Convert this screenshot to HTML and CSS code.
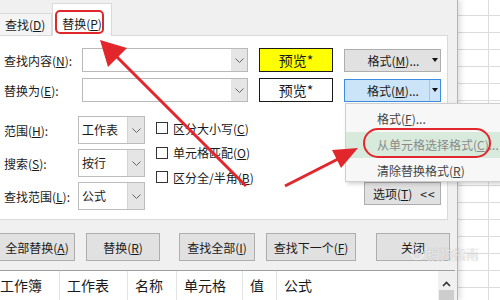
FILE: index.html
```html
<!DOCTYPE html>
<html lang="zh-CN">
<head>
    <meta charset="UTF-8">
    <title>查找和替换</title>
    <link rel="stylesheet" href="styles.css">
</head>
<body>
<div class="screen">
    <div class="dialog">
        <div class="tabs">
            <div class="tab">查找(<u>D</u>)</div>
            <div class="tab active">替换(<u>P</u>)</div>
        </div>

        <div class="panel">
            <div class="row">
                <span class="lbl">查找内容(<u>N</u>):</span>
                <div class="combo"><span class="drop"><svg width="9" height="5" viewBox="0 0 9 5"><path d="M0.5 0.5 L4.5 4.5 L8.5 0.5" fill="none" stroke="#666" stroke-width="1"/></svg></span></div>
                <div class="preview hl">预览*</div>
                <div class="fmt"><span class="txt">格式(<u>M</u>)...</span><span class="split"><i class="caret"></i></span></div>
            </div>
            <div class="row">
                <span class="lbl">替换为(<u>E</u>):</span>
                <div class="combo"><span class="drop"><svg width="9" height="5" viewBox="0 0 9 5"><path d="M0.5 0.5 L4.5 4.5 L8.5 0.5" fill="none" stroke="#666" stroke-width="1"/></svg></span></div>
                <div class="preview">预览*</div>
                <div class="fmt on"><span class="txt">格式(<u>M</u>)...</span><span class="split"><i class="caret"></i></span></div>
            </div>

            <div class="opts">
                <div class="fields">
                    <div class="field">
                        <span class="lbl">范围(<u>H</u>):</span>
                        <div class="select"><span>工作表</span><span class="drop"><svg width="9" height="5" viewBox="0 0 9 5"><path d="M0.5 0.5 L4.5 4.5 L8.5 0.5" fill="none" stroke="#666" stroke-width="1"/></svg></span></div>
                    </div>
                    <div class="field">
                        <span class="lbl">搜索(<u>S</u>):</span>
                        <div class="select"><span>按行</span><span class="drop"><svg width="9" height="5" viewBox="0 0 9 5"><path d="M0.5 0.5 L4.5 4.5 L8.5 0.5" fill="none" stroke="#666" stroke-width="1"/></svg></span></div>
                    </div>
                    <div class="field">
                        <span class="lbl">查找范围(<u>L</u>):</span>
                        <div class="select"><span>公式</span><span class="drop"><svg width="9" height="5" viewBox="0 0 9 5"><path d="M0.5 0.5 L4.5 4.5 L8.5 0.5" fill="none" stroke="#666" stroke-width="1"/></svg></span></div>
                    </div>
                </div>
                <div class="checks">
                    <div class="check"><span class="box"></span><span>区分大小写(<u>C</u>)</span></div>
                    <div class="check"><span class="box"></span><span>单元格匹配(<u>O</u>)</span></div>
                    <div class="check"><span class="box"></span><span>区分全/半角(<u>B</u>)</span></div>
                </div>
                <div class="btn options-btn"><span>选项(<u>T</u>)</span><span class="less">&lt;&lt;</span></div>
            </div>
        </div>

        <div class="actions">
            <div class="btn w76"><span>全部替换(<u>A</u>)</span></div>
            <div class="btn w74 gap11"><span>替换(<u>R</u>)</span></div>
            <div class="btn w76 gap19"><span>查找全部(<u>I</u>)</span></div>
            <div class="btn w90 gap11"><span>查找下一个(<u>F</u>)</span></div>
            <div class="btn w74 gap20"><span>关闭</span></div>
        </div>

        <div class="results">
            <div class="col c1">工作簿</div>
            <div class="col c2">工作表</div>
            <div class="col c3">名称</div>
            <div class="col c4">单元格</div>
            <div class="col c5">值</div>
            <div class="col c6">公式</div>
            <div class="vscroll">
                <svg width="17" height="12" viewBox="0 0 17 12"><path d="M5 9 L8.5 5.5 L12 9" fill="none" stroke="#333" stroke-width="1.6"/></svg>
                <div class="thumb"></div>
            </div>
        </div>
    </div>

    <div class="sheet"></div>

    <!-- dropdown of the second 格式 button -->
    <div class="menu">
        <div class="item">格式(<u>F</u>)...</div>
        <div class="item sel">从单元格选择格式(<u>C</u>)...</div>
        <div class="item">清除替换格式(<u>R</u>)</div>
    </div>

    <div class="wm"><span class="wm-logo"></span>搜狗指南</div>

    <!-- red annotations -->
    <div class="mark mark-tab"></div>
    <div class="mark mark-item"></div>
    <svg class="arrows" width="500" height="300" viewBox="0 0 500 300">
        <line x1="246" y1="186" x2="114" y2="54" stroke="#e1262c" stroke-width="3"/>
        <polygon points="100,40 127,48 108,67" fill="#e1262c"/>
        <line x1="285" y1="186" x2="340" y2="158" stroke="#e1262c" stroke-width="3"/>
        <polygon points="358,148 341,168 332,150" fill="#e1262c"/>
    </svg>
</div>
</body>
</html>
```

FILE: styles.css
```css
body {
    margin: 0;
    font-family: "Noto Sans CJK SC", "Microsoft YaHei", sans-serif;
    font-size: 12px;
    color: #1a1a1a;
}
u {
    text-underline-offset: 1px;
}
.screen {
    position: relative;
    width: 500px;
    height: 300px;
    overflow: hidden;
    display: flex;
    background: #fff;
}
.dialog {
    width: 458px;
    flex: none;
    box-sizing: border-box;
    background: #f0f0f0;
    border-right: 1px solid #b4b4b4;
    box-shadow: 3px 0 5px rgba(0, 0, 0, 0.12);
    position: relative;
    z-index: 1;
}
.sheet {
    flex: 1;
    background-color: #fff;
    background-image:
        linear-gradient(to right, transparent 30px, #dcdcdc 30px, #dcdcdc 31px, transparent 31px),
        repeating-linear-gradient(to bottom, transparent 0 16px, #dcdcdc 16px 17px);
    background-position: 0 0, 0 -1px;
}

/* tabs */
.tabs {
    height: 35px;
    display: flex;
    align-items: flex-end;
}
.tab {
    box-sizing: border-box;
    width: 53px;
    height: 22px;
    margin-left: -1px;
    padding-left: 5px;
    border: 1px solid #d9d9d9;
    border-bottom: none;
    background: #f4f4f4;
    display: flex;
    align-items: center;
}
.tab.active {
    width: 60px;
    height: 33px;
    margin-left: 0;
    margin-bottom: -1px;
    padding: 7px 0 0;
    justify-content: center;
    background: #fff;
    position: relative;
    z-index: 1;
}

/* white tab page */
.panel {
    box-sizing: border-box;
    width: 449px;
    height: 185px;
    margin-left: -1px;
    padding: 12px 6px 0 4px;
    background: #fff;
    border: 1px solid #d9d9d9;
}
.row {
    display: flex;
    align-items: center;
    height: 24px;
}
.row + .row {
    margin-top: 6px;
}
.lbl {
    width: 78px;
    flex: none;
    white-space: nowrap;
}
.combo {
    width: 166px;
    height: 24px;
    box-sizing: border-box;
    border: 1px solid #b9b9b9;
    display: flex;
    justify-content: flex-end;
    background: #fff;
}
.drop {
    width: 16px;
    flex: none;
    background: #e5e5e5;
    display: flex;
    align-items: center;
    justify-content: center;
}
.preview {
    width: 74px;
    height: 24px;
    box-sizing: border-box;
    margin-left: 11px;
    border: 1px solid #1a1a1a;
    text-align: center;
    line-height: 22px;
    font-size: 14px;
    background: #fff;
}
.preview.hl {
    background: #ffff00;
}
.fmt {
    width: 97px;
    height: 23px;
    box-sizing: border-box;
    margin-left: 11px;
    display: flex;
    border: 1px solid #adadad;
    background: #e1e1e1;
}
.fmt .txt {
    flex: 1;
    text-align: center;
    padding-left: 12px;
    line-height: 21px;
}
.fmt .split {
    width: 10px;
    display: flex;
    align-items: center;
    justify-content: center;
}
.caret {
    width: 0;
    height: 0;
    border-left: 3.5px solid transparent;
    border-right: 3.5px solid transparent;
    border-top: 4px solid #111;
}
.fmt.on {
    background: #cce4f7;
    border-color: #3d8ee0;
}
.fmt.on .split {
    border-left: 1px solid #a4c6e6;
}

/* options block */
.opts {
    display: flex;
    height: 94px;
    margin-top: 14px;
}
.fields {
    display: flex;
    flex-direction: column;
    gap: 5px;
}
.field {
    display: flex;
    align-items: center;
    height: 28px;
}
.field .lbl {
    width: 74px;
}
.select {
    width: 67px;
    height: 28px;
    box-sizing: border-box;
    border: 1px solid #bcbcbc;
    display: flex;
    background: #fff;
}
.select span:first-child {
    flex: 1;
    padding-left: 3px;
    line-height: 26px;
}
.select .drop {
    width: 16px;
    border-left: 1px solid #d4d4d4;
}
.checks {
    margin-left: 11px;
}
.check {
    height: 24.5px;
    display: flex;
    align-items: center;
    gap: 5px;
    white-space: nowrap;
}
.box {
    width: 10px;
    height: 10px;
    border: 1px solid #333;
    background: #fff;
}
.btn {
    box-sizing: border-box;
    height: 28px;
    border: 1px solid #adadad;
    background: #e1e1e1;
    display: flex;
    align-items: center;
    justify-content: center;
    white-space: nowrap;
}
.options-btn {
    width: 77px;
    height: 23px;
    margin-left: auto;
    margin-bottom: 5px;
    align-self: flex-end;
    justify-content: flex-start;
    padding-left: 8px;
}
.less {
    margin-left: 8px;
    letter-spacing: 1px;
}

/* bottom buttons */
.actions {
    display: flex;
    margin: 13px 0 0 -1px;
}
.w74 { width: 74px; }
.w76 { width: 76px; }
.w90 { width: 90px; }
.gap11 { margin-left: 11px; }
.gap19 { margin-left: 19px; }
.gap20 { margin-left: 20px; }

/* results list header */
.results {
    display: flex;
    width: 462px;
    height: 30px;
    margin: 9px 0 0 -7px;
    border-top: 1px solid #a0a0a0;
    background: #fff;
}
.col {
    box-sizing: border-box;
    padding-left: 7px;
    border-right: 1px solid #e3e3e3;
    line-height: 28px;
    font-size: 14px;
}
.c1 { width: 67px; }
.c2 { width: 68px; }
.c3 { width: 49px; }
.c4 { width: 66px; }
.c5 { width: 34px; }
.c6 { flex: 1; border-right: none; }
.vscroll {
    width: 17px;
    background: #f0f0f0;
}
.vscroll svg {
    display: block;
    margin-top: 6px;
}
.thumb {
    height: 20px;
    margin: 1px 1px 0;
    background: #cdcdcd;
}

/* popup menu */
.menu {
    position: absolute;
    left: 345px;
    top: 103px;
    width: 160px;
    height: 79px;
    box-sizing: border-box;
    padding-top: 2px;
    background: #f7f7f7;
    border: 1px solid #cfcfcf;
    box-shadow: 2px 2px 4px rgba(0, 0, 0, 0.18);
    z-index: 3;
}
.menu .item {
    height: 26px;
    line-height: 26px;
    padding-left: 31px;
    color: #444;
    white-space: nowrap;
}
.menu .item.sel {
    background: #d8eadc;
    color: #8a8a8a;
}

/* watermark */
.wm {
    position: absolute;
    left: 411px;
    top: 246px;
    font-size: 13px;
    line-height: 15px;
    color: rgba(255, 255, 255, 0.75);
    text-shadow: 0 0 1px rgba(110, 110, 110, 0.55);
    z-index: 2;
    white-space: nowrap;
}
.wm-logo {
    display: inline-block;
    width: 11px;
    height: 11px;
    margin-right: 3px;
    border: 1.5px solid rgba(255, 255, 255, 0.75);
    border-radius: 50%;
    vertical-align: -1px;
}

/* annotations */
.mark {
    position: absolute;
    box-sizing: border-box;
    border: 2.5px solid #e1262c;
    z-index: 4;
}
.mark-tab {
    left: 55px;
    top: 10px;
    width: 49px;
    height: 24px;
    border-radius: 5px;
}
.mark-item {
    left: 363px;
    top: 128px;
    width: 128px;
    height: 30px;
    border-radius: 15px;
}
.arrows {
    position: absolute;
    left: 0;
    top: 0;
    z-index: 5;
}
```
